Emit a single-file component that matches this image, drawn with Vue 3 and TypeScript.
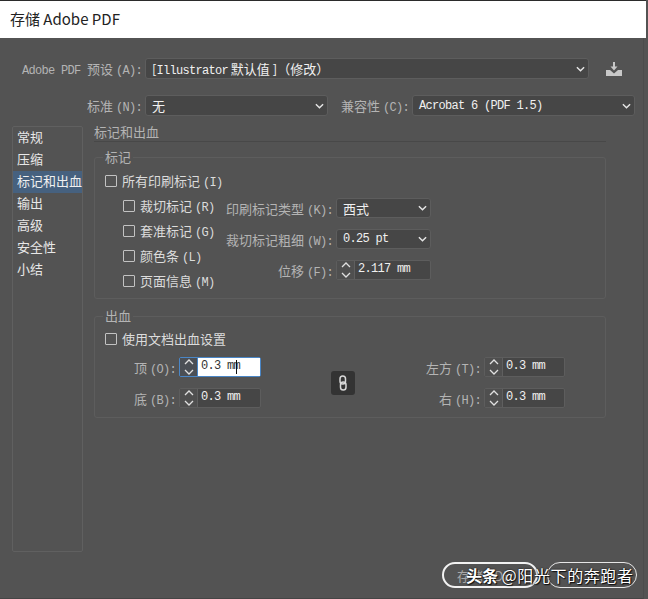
<script setup lang="ts">
interface Mark {
  name: string
  key: string
}

interface SpinField {
  name: string
  key: string
  value: string
  focused?: boolean
}

const navItems = ["常规", "压缩", "标记和出血", "输出", "高级", "安全性", "小结"]
const activeNav = "标记和出血"

const marks: Mark[] = [
  { name: "裁切标记", key: "(R)" },
  { name: "套准标记", key: "(G)" },
  { name: "颜色条", key: "(L)" },
  { name: "页面信息", key: "(M)" },
]

const bleedLeft: SpinField[] = [
  { name: "顶", key: "(O):", value: "0.3 mm", focused: true },
  { name: "底", key: "(B):", value: "0.3 mm" },
]

const bleedRight: SpinField[] = [
  { name: "左方", key: "(T):", value: "0.3 mm" },
  { name: "右", key: "(H):", value: "0.3 mm" },
]
</script>

<template>
  <div class="dialog">
    <header class="title">存储 Adobe PDF</header>

    <div class="body">
      <div class="row preset-row">
        <label class="label preset-label"><span class="lat">Adobe PDF </span>预设 <span class="lat">(A):</span></label>
        <div class="select preset-select">
          <span class="val">[<span class="lat-val">Illustrator</span> 默认值 ]（修改）</span>
          <svg class="chev" viewBox="0 0 10 6"><path d="M1 1l4 4 4-4" /></svg>
        </div>
        <svg class="save-icon" viewBox="0 0 18 14">
          <path d="M8 0h2v4.500h2.500L9 8.500 5.500 4.500H8z" />
          <path d="M1 8h4l4 3.500L13 8h4v6H1z" />
        </svg>
      </div>

      <div class="row std-row">
        <label class="label std-label">标准 <span class="lat">(N):</span></label>
        <div class="select std-select">
          <span class="val">无</span>
          <svg class="chev" viewBox="0 0 10 6"><path d="M1 1l4 4 4-4" /></svg>
        </div>
        <label class="label compat-label">兼容性 <span class="lat">(C):</span></label>
        <div class="select compat-select">
          <span class="lat-val">Acrobat 6 (PDF 1.5)</span>
          <svg class="chev" viewBox="0 0 10 6"><path d="M1 1l4 4 4-4" /></svg>
        </div>
      </div>

      <div class="main">
        <nav class="side">
          <div v-for="item in navItems" :key="item" class="nav-item" :class="{ active: item === activeNav }">{{ item }}</div>
        </nav>

        <section class="content">
          <h2 class="heading">标记和出血</h2>

          <fieldset class="group marks-group">
            <legend>标记</legend>
            <div class="check-row main-check">
              <span class="box"></span>
              <span>所有印刷标记 <span class="lat">(I)</span></span>
            </div>
            <div class="marks-body">
              <div class="marks-list">
                <div v-for="m in marks" :key="m.key" class="check-row">
                  <span class="box"></span>
                  <span>{{ m.name }} <span class="lat">{{ m.key }}</span></span>
                </div>
              </div>
              <div class="marks-opts">
                <div class="opt">
                  <label class="label opt-label">印刷标记类型 <span class="lat">(K):</span></label>
                  <div class="select opt-ctrl">
                    <span class="val">西式</span>
                    <svg class="chev" viewBox="0 0 10 6"><path d="M1 1l4 4 4-4" /></svg>
                  </div>
                </div>
                <div class="opt">
                  <label class="label opt-label">裁切标记粗细 <span class="lat">(W):</span></label>
                  <div class="select opt-ctrl">
                    <span class="lat-val">0.25 pt</span>
                    <svg class="chev" viewBox="0 0 10 6"><path d="M1 1l4 4 4-4" /></svg>
                  </div>
                </div>
                <div class="opt">
                  <label class="label opt-label">位移 <span class="lat">(F):</span></label>
                  <div class="spin opt-ctrl">
                    <span class="stepper">
                      <svg viewBox="0 0 10 18"><path d="M1 6l4-4 4 4M1 12l4 4 4-4" /></svg>
                    </span>
                    <span class="spin-val">2.117 mm</span>
                  </div>
                </div>
              </div>
            </div>
          </fieldset>

          <fieldset class="group bleed-group">
            <legend>出血</legend>
            <div class="check-row bleed-check">
              <span class="box"></span>
              <span>使用文档出血设置</span>
            </div>
            <div class="bleed-body">
              <div class="bleed-col left-col">
                <div v-for="f in bleedLeft" :key="f.key" class="opt">
                  <label class="label bleed-label">{{ f.name }} <span class="lat">{{ f.key }}</span></label>
                  <div class="spin bleed-ctrl" :class="{ focused: f.focused }">
                    <span class="stepper">
                      <svg viewBox="0 0 10 18"><path d="M1 6l4-4 4 4M1 12l4 4 4-4" /></svg>
                    </span>
                    <span class="spin-val">{{ f.value }}</span>
                    <i v-if="f.focused" class="ibeam"></i>
                  </div>
                </div>
              </div>
              <button class="link-btn">
                <svg viewBox="0 0 10 16">
                  <rect x="2" y="1" width="5.500" height="8" rx="2.750" />
                  <rect x="2.500" y="7" width="5.500" height="8" rx="2.750" />
                </svg>
              </button>
              <div class="bleed-col right-col">
                <div v-for="f in bleedRight" :key="f.key" class="opt">
                  <label class="label bleed-label wide">{{ f.name }} <span class="lat">{{ f.key }}</span></label>
                  <div class="spin bleed-ctrl narrow">
                    <span class="stepper">
                      <svg viewBox="0 0 10 18"><path d="M1 6l4-4 4 4M1 12l4 4 4-4" /></svg>
                    </span>
                    <span class="spin-val">{{ f.value }}</span>
                  </div>
                </div>
              </div>
            </div>
          </fieldset>
        </section>
      </div>

      <footer class="actions">
        <button class="pill save">存储 PDF</button>
        <button class="pill cancel"></button>
      </footer>
    </div>

    <div class="watermark"><b>头条</b> <span class="wm-name">@阳光下的奔跑者</span></div>
  </div>
</template>

<style>
html,
body {
  margin: 0;
  background: #535353;
}
</style>

<style scoped>
.dialog {
  position: relative;
  width: 648px;
  height: 599px;
  overflow: hidden;
  background: #535353;
  font-family: "Noto Sans CJK SC", "Liberation Sans", sans-serif;
  font-size: 13px;
  color: #d6d6d6;
  box-sizing: border-box;
}

.title {
  height: 38px;
  box-sizing: border-box;
  border-top: 1px solid #2b2b2b;
  margin-right: 2px;
  padding-left: 10px;
  background: #fff;
  color: #222;
  font-size: 15px;
  line-height: 36px;
}

.body {
  padding: 20px 0 0 12px;
  height: 561px;
  box-sizing: border-box;
  border-right: 1px solid #4c4c4c;
  margin-right: 4px;
  border-bottom: 1px solid #454545;
}

.row {
  display: flex;
  align-items: center;
  height: 21px;
}

.lat,
.lat-val,
.spin-val {
  font-family: "Liberation Mono", "DejaVu Sans Mono", monospace;
  font-size: 12px;
  letter-spacing: -0.7px;
}

.lat-val,
.spin-val {
  color: #f0f0f0;
}

.label {
  flex: none;
  box-sizing: border-box;
  padding-right: 3px;
  text-align: right;
  color: #b4b4b4;
  white-space: nowrap;
}

.preset-label {
  width: 133px;
}

.std-row {
  margin-top: 16px;
}

.std-label {
  width: 133px;
}

.select {
  flex: none;
  display: flex;
  align-items: center;
  justify-content: space-between;
  box-sizing: border-box;
  height: 21px;
  padding: 0 3px 0 6px;
  background: #464646;
  border: 1px solid #5d5d5d;
  border-radius: 3px;
  color: #f0f0f0;
  white-space: nowrap;
}

.preset-select {
  width: 444px;
}

.std-select {
  width: 183px;
}

.compat-label {
  width: 84px;
}

.compat-select {
  width: 223px;
}

.chev {
  flex: none;
  width: 9px;
  height: 6px;
  fill: none;
  stroke: #e6e6e6;
  stroke-width: 1.6;
}

.save-icon {
  flex: none;
  width: 18px;
  height: 14px;
  margin-left: 16px;
  fill: #c8c8c8;
}

.main {
  display: flex;
  margin-top: 10px;
}

.side {
  flex: none;
  box-sizing: border-box;
  width: 71px;
  height: 426px;
  border: 1px solid #606060;
  border-radius: 2px;
}

.nav-item {
  height: 22px;
  padding-left: 4px;
  line-height: 20px;
  color: #e8e8e8;
  white-space: nowrap;
}

.nav-item.active {
  background: #46617f;
  color: #f0f0f0;
}

.content {
  flex: none;
  width: 512px;
  margin-left: 11px;
}

.heading {
  margin: 0;
  height: 15px;
  border-bottom: 1px solid #484848;
  font-size: 13px;
  font-weight: 400;
  line-height: 12px;
  color: #b4b4b4;
}

.group {
  margin: 0;
  padding: 0 0 0 10px;
  border: 1px solid #5d5d5d;
  border-radius: 3px;
  box-sizing: border-box;
  min-width: 0;
}

.group legend {
  padding: 0 2px;
  margin-left: -2px;
  font-size: 13px;
  line-height: 14px;
  color: #b4b4b4;
}

.marks-group {
  margin-top: 8px;
  height: 149px;
}

.bleed-group {
  margin-top: 10px;
  height: 109px;
}

.check-row {
  display: flex;
  align-items: center;
  gap: 5px;
  height: 25px;
  white-space: nowrap;
  color: #dcdcdc;
}

.box {
  flex: none;
  width: 12px;
  height: 12px;
  box-sizing: border-box;
  border: 1px solid #c2c2c2;
  border-radius: 1px;
}

.main-check {
  margin-top: 4px;
}

.marks-body {
  display: flex;
}

.marks-list {
  flex: none;
  width: 103px;
  padding-left: 18px;
}

.marks-opts {
  display: flex;
  flex-direction: column;
  gap: 11px;
  padding-top: 5px;
}

.opt {
  display: flex;
  align-items: center;
  height: 20px;
}

.opt-label {
  width: 110px;
}

.opt-ctrl {
  width: 95px;
  height: 20px;
}

.spin {
  flex: none;
  position: relative;
  display: flex;
  box-sizing: border-box;
  height: 20px;
  background: #464646;
  border: 1px solid #5d5d5d;
  border-radius: 2px;
}

.stepper {
  flex: none;
  display: flex;
  align-items: center;
  justify-content: center;
  width: 17px;
  background: #4f4f4f;
  border-right: 1px solid #5f5f5f;
}

.stepper svg {
  width: 10px;
  height: 18px;
  fill: none;
  stroke: #e0e0e0;
  stroke-width: 1.300;
}

.spin-val {
  padding-left: 3px;
  line-height: 17px;
  white-space: pre;
}

.bleed-check {
  margin-top: 3px;
  height: 25px;
}

.bleed-body {
  display: flex;
  align-items: center;
  margin-top: 6px;
}

.bleed-col {
  display: flex;
  flex-direction: column;
  gap: 11px;
}

.bleed-label {
  width: 74px;
}

.bleed-label.wide {
  width: 129px;
}

.bleed-ctrl {
  width: 82px;
}

.bleed-ctrl.narrow {
  width: 81px;
}

.spin.focused {
  border-color: #4a86c6;
}

.spin.focused .stepper {
  background: #4b4f55;
  border-right-color: #4a86c6;
}

.spin.focused .spin-val {
  flex: 1;
  background: #fff;
  color: #333;
}

.ibeam {
  position: absolute;
  left: 56px;
  top: 2px;
  width: 1px;
  height: 14px;
  background: #111;
}

.link-btn {
  flex: none;
  display: flex;
  align-items: center;
  justify-content: center;
  width: 24px;
  height: 24px;
  margin-left: 70px;
  padding: 0;
  border: none;
  border-radius: 3px;
  background: #333;
}

.link-btn svg {
  width: 10px;
  height: 16px;
  fill: none;
  stroke: #d8d8d8;
  stroke-width: 1.500;
}

.actions {
  display: flex;
  gap: 9px;
  margin-top: 10px;
  padding-left: 430px;
}

.pill {
  flex: none;
  box-sizing: border-box;
  height: 26px;
  padding: 0 0 0 13px;
  border-radius: 13px;
  background: transparent;
  font-family: inherit;
  font-size: 13px;
  color: #a8a8a8;
  text-align: left;
}

.save {
  width: 96px;
  border: 2px solid #f2f2f2;
}

.cancel {
  width: 90px;
  border: 1px solid #e6e6e6;
}

.watermark {
  position: absolute;
  left: 466px;
  top: 563px;
  font-size: 16px;
  line-height: 24px;
  color: #fff;
  white-space: nowrap;
  text-shadow: 0 0 2px #000, 1px 1px 1px #111;
}

.wm-name {
  letter-spacing: 0.6px;
}
</style>
